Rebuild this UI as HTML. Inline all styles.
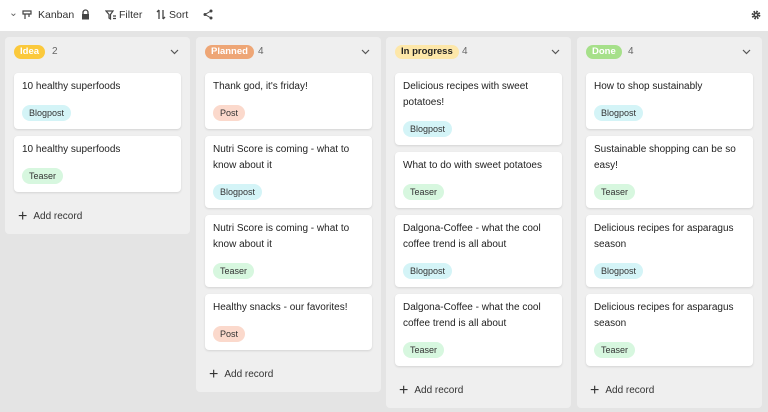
<!DOCTYPE html>
<html><head><meta charset="utf-8"><style>
*{box-sizing:border-box;margin:0;padding:0}
body{width:768px;height:412px;overflow:hidden;background:#e4e4e4;font-family:"Liberation Sans",sans-serif;color:#222;position:relative}
.tb{position:absolute;left:0;top:0;width:768px;height:31px;background:#fff;font-size:10.5px;color:#333}
.tb span{position:absolute;top:9px}
.col{position:absolute;top:37px;width:185px;background:#efefef;border-radius:4px;padding:0 9px 5px}
.hd{height:36px;position:relative}
.pill{position:absolute;left:0;top:8px;height:14px;line-height:14px;border-radius:7px;font-size:9.5px;font-weight:bold;padding:0 6px;color:#fff}
.cnt{position:absolute;top:9px;font-size:10px;color:#666}
.chev{position:absolute;right:2px;top:12px}
.card{background:#fff;border-radius:4px;box-shadow:0 1px 2px rgba(0,0,0,.12);padding:6px 8px 8px;margin-bottom:7px;font-size:10px}
.t{line-height:16px;color:#222}
.tag{display:inline-block;margin-top:10px;height:16px;line-height:16px;border-radius:8px;padding:0 7px;font-size:9px;color:#333}
.b{background:#d4f4f7}.te{background:#d7f7df}.p{background:#fbd9cc}
.add{height:24px;line-height:24px;font-size:10px;color:#333;padding-left:4px;margin-top:13px}
.add b{font-size:16px;font-weight:normal;margin-right:6px;vertical-align:-2px}
</style></head><body>
<div class="tb">
<span style="left:9px;top:7px;color:#666">⌄</span>
<svg style="position:absolute;left:22px;top:10px" width="10" height="10" viewBox="0 0 10 10" fill="none" stroke="#444" stroke-width="1.2"><path d="M1 1h8v3H1zM3 4v5M7 4v3"/></svg>
<span style="left:38px">Kanban</span>
<svg style="position:absolute;left:81px;top:9px" width="9" height="11" viewBox="0 0 9 11"><path d="M2 5V3.5a2.5 2.5 0 0 1 5 0V5" fill="none" stroke="#444" stroke-width="1.3"/><rect x="1" y="5" width="7" height="5.5" fill="#444"/></svg>
<svg style="position:absolute;left:105px;top:10px" width="11" height="10" viewBox="0 0 11 10" fill="none" stroke="#444" stroke-width="1.2"><path d="M1 1h7L5.5 4.5V9L4 8V4.5z"/><path d="M8 6h3M8 8.5h3"/></svg>
<span style="left:119px">Filter</span>
<svg style="position:absolute;left:156px;top:9px" width="10" height="11" viewBox="0 0 10 11" fill="none" stroke="#444" stroke-width="1.3"><path d="M3 1v9M1 3l2-2M7 1v9M9 8l-2 2"/></svg>
<span style="left:169px">Sort</span>
<svg style="position:absolute;left:203px;top:9px" width="10" height="11" viewBox="0 0 10 11" fill="#444"><circle cx="8" cy="2" r="1.5"/><circle cx="2" cy="5.5" r="1.5"/><circle cx="8" cy="9" r="1.5"/><path d="M8 2L2 5.5L8 9" stroke="#444" fill="none"/></svg>
<svg style="position:absolute;left:751px;top:10px" width="10" height="10" viewBox="0 0 10 10"><circle cx="5" cy="5" r="3.3" fill="none" stroke="#444" stroke-width="2.2" stroke-dasharray="1.6 1"/><circle cx="5" cy="5" r="2.5" fill="#444"/><circle cx="5" cy="5" r="1" fill="#fff"/></svg>
</div>

<div class="col" style="left:5px">
<div class="hd"><div class="pill" style="background:#fbc93c">Idea</div><div class="cnt" style="left:38px">2</div><svg class="chev" width="9" height="6" viewBox="0 0 9 6"><path d="M1 1l3.5 3.5L8 1" fill="none" stroke="#555" stroke-width="1.2"/></svg></div>
<div class="card"><div class="t">10 healthy superfoods</div><span class="tag b">Blogpost</span></div>
<div class="card"><div class="t">10 healthy superfoods</div><span class="tag te">Teaser</span></div>
<div class="add"><b>+</b>Add record</div>
</div>

<div class="col" style="left:196px">
<div class="hd"><div class="pill" style="background:#eea676">Planned</div><div class="cnt" style="left:53px">4</div><svg class="chev" width="9" height="6" viewBox="0 0 9 6"><path d="M1 1l3.5 3.5L8 1" fill="none" stroke="#555" stroke-width="1.2"/></svg></div>
<div class="card"><div class="t">Thank god, it's friday!</div><span class="tag p">Post</span></div>
<div class="card"><div class="t">Nutri Score is coming - what to know about it</div><span class="tag b">Blogpost</span></div>
<div class="card"><div class="t">Nutri Score is coming - what to know about it</div><span class="tag te">Teaser</span></div>
<div class="card"><div class="t">Healthy snacks - our favorites!</div><span class="tag p">Post</span></div>
<div class="add"><b>+</b>Add record</div>
</div>

<div class="col" style="left:386px">
<div class="hd"><div class="pill" style="background:#fde7a9;color:#222">In progress</div><div class="cnt" style="left:67px">4</div><svg class="chev" width="9" height="6" viewBox="0 0 9 6"><path d="M1 1l3.5 3.5L8 1" fill="none" stroke="#555" stroke-width="1.2"/></svg></div>
<div class="card"><div class="t">Delicious recipes with sweet<br>potatoes!</div><span class="tag b">Blogpost</span></div>
<div class="card"><div class="t">What to do with sweet potatoes</div><span class="tag te">Teaser</span></div>
<div class="card"><div class="t">Dalgona-Coffee - what the cool<br>coffee trend is all about</div><span class="tag b">Blogpost</span></div>
<div class="card"><div class="t">Dalgona-Coffee - what the cool<br>coffee trend is all about</div><span class="tag te">Teaser</span></div>
<div class="add"><b>+</b>Add record</div>
</div>

<div class="col" style="left:577px">
<div class="hd"><div class="pill" style="background:#a6e08a">Done</div><div class="cnt" style="left:42px">4</div><svg class="chev" width="9" height="6" viewBox="0 0 9 6"><path d="M1 1l3.5 3.5L8 1" fill="none" stroke="#555" stroke-width="1.2"/></svg></div>
<div class="card"><div class="t">How to shop sustainably</div><span class="tag b">Blogpost</span></div>
<div class="card"><div class="t">Sustainable shopping can be so<br>easy!</div><span class="tag te">Teaser</span></div>
<div class="card"><div class="t">Delicious recipes for asparagus<br>season</div><span class="tag b">Blogpost</span></div>
<div class="card"><div class="t">Delicious recipes for asparagus<br>season</div><span class="tag te">Teaser</span></div>
<div class="add"><b>+</b>Add record</div>
</div>
</body></html>
